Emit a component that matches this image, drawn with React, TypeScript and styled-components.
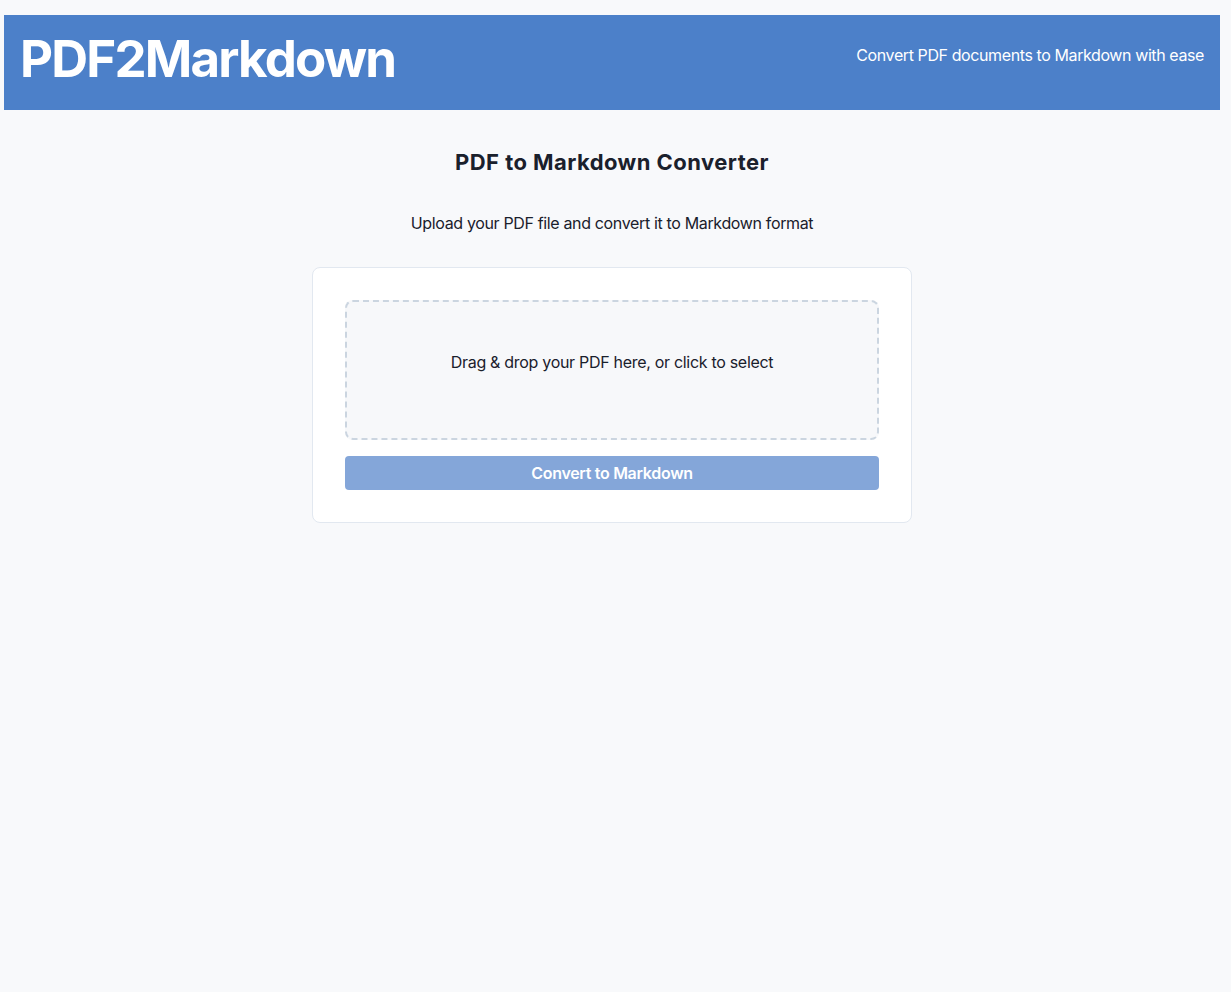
import React from 'react';
import styled, { createGlobalStyle } from 'styled-components';

const GlobalStyle = createGlobalStyle`
    html, body {
        margin: 0;
        padding: 0;
        background: #f8f9fb;
        font-family: Inter, "Noto Sans", "Liberation Sans", sans-serif;
        color: #1a202c;
    }
`;

const Page = styled.div`
    min-height: 992px;
    padding: 15px 11px 0 4px;
    box-sizing: border-box;
`;

const Header = styled.header`
    display: flex;
    justify-content: space-between;
    align-items: center;
    height: 95px;
    padding: 0 16px;
    box-sizing: border-box;
    background: #4c80c9;
    color: #ffffff;
`;

const Logo = styled.h1`
    margin: 0;
    font-size: 51px;
    line-height: 1;
    font-weight: 700;
    letter-spacing: -1.8px;
    padding-bottom: 8px;
`;

const Tagline = styled.p`
    margin: 0 0 15px;
    font-size: 16px;
    line-height: 24px;
    letter-spacing: -0.4px;
`;

const Main = styled.main`
    display: flex;
    flex-direction: column;
    align-items: center;
    padding-top: 37px;
`;

const Title = styled.h2`
    margin: 0;
    font-size: 22px;
    line-height: 30px;
    font-weight: 700;
    letter-spacing: 0.45px;
`;

const Subtitle = styled.p`
    margin: 34px 0 32px;
    font-size: 16px;
    line-height: 24px;
    letter-spacing: -0.35px;
`;

const Card = styled.div`
    width: 600px;
    box-sizing: border-box;
    padding: 32px;
    background: #ffffff;
    border: 1px solid #e2e8f0;
    border-radius: 8px;
    display: flex;
    flex-direction: column;
    gap: 16px;
`;

const DropZone = styled.div`
    min-height: 140px;
    box-sizing: border-box;
    padding-top: 48px;
    text-align: center;
    font-size: 16px;
    line-height: 24px;
    letter-spacing: -0.3px;
    background: #f7f8fa;
    border: 2px dashed #cbd5e0;
    border-radius: 8px;
    cursor: pointer;
`;

const Button = styled.button`
    height: 34px;
    border: none;
    border-radius: 4px;
    background: #84a6d9;
    color: #ffffff;
    font-family: inherit;
    font-size: 16px;
    font-weight: 600;
    letter-spacing: -0.3px;
    cursor: not-allowed;
`;

const App = () => {
    return <>
        <GlobalStyle />
        <Page>
            <Header>
                <Logo>PDF2Markdown</Logo>
                <Tagline>Convert PDF documents to Markdown with ease</Tagline>
            </Header>
            <Main>
                <Title>PDF to Markdown Converter</Title>
                <Subtitle>Upload your PDF file and convert it to Markdown format</Subtitle>
                <Card>
                    <DropZone>Drag &amp; drop your PDF here, or click to select</DropZone>
                    <Button disabled>Convert to Markdown</Button>
                </Card>
            </Main>
        </Page>
    </>;
};

export default App;
